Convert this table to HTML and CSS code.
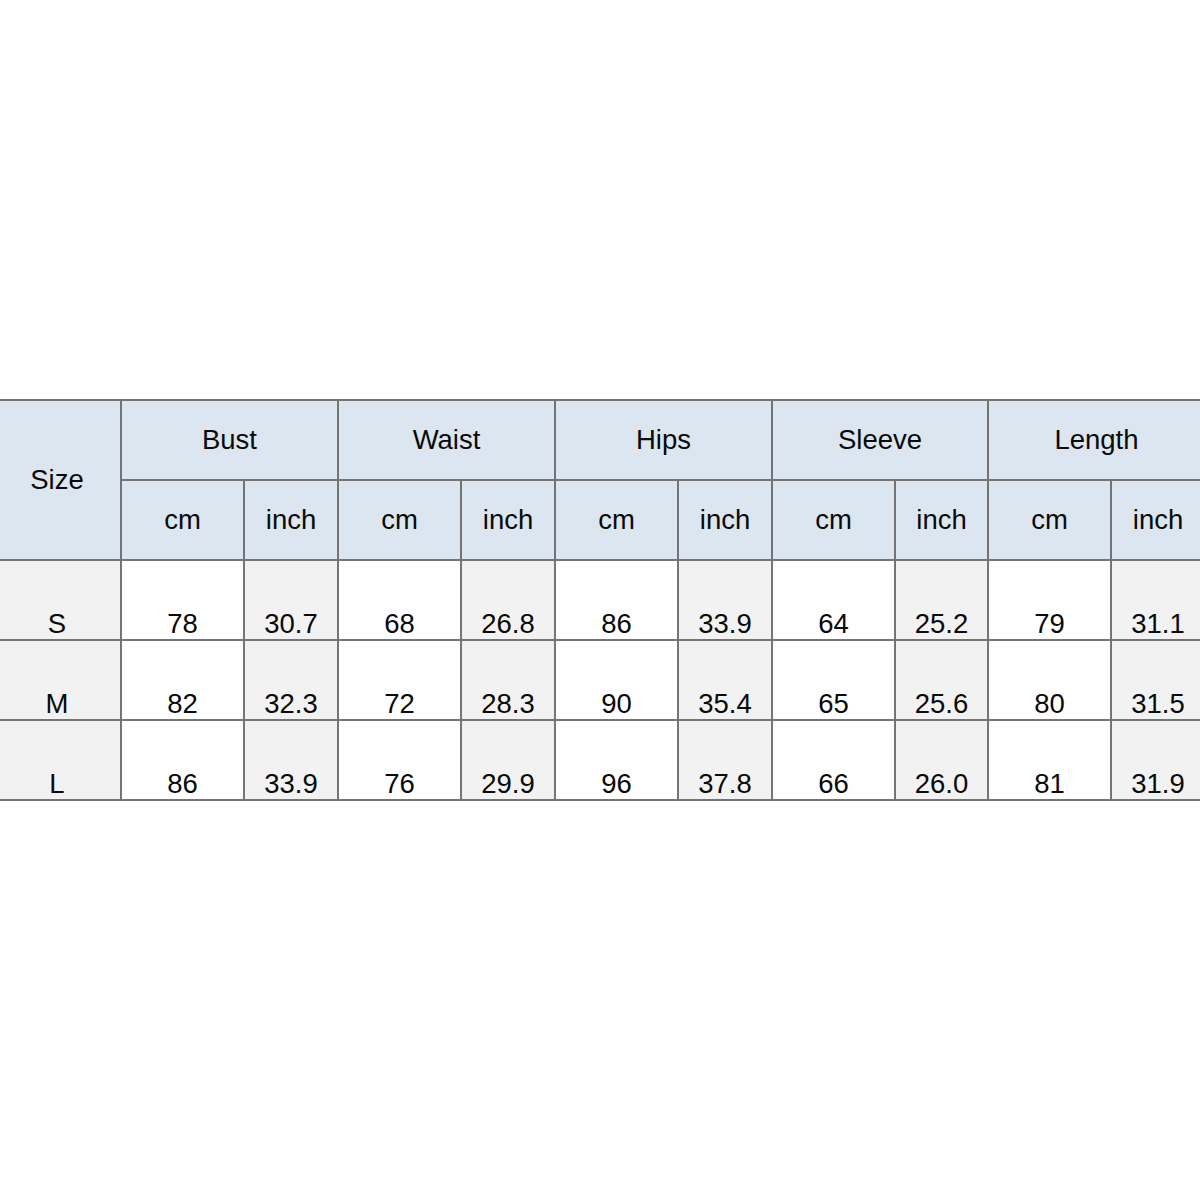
FILE: index.html
```html
<!DOCTYPE html>
<html>
<head>
<meta charset="utf-8">
<link rel="stylesheet" href="styles.css">
</head>
<body>
<div class="page">
  <div class="chart">
    <div class="cell head size">Size</div>
    <div class="cell head group">Bust</div>
    <div class="cell head group">Waist</div>
    <div class="cell head group">Hips</div>
    <div class="cell head group">Sleeve</div>
    <div class="cell head group">Length</div>

    <div class="cell head">cm</div><div class="cell head">inch</div>
    <div class="cell head">cm</div><div class="cell head">inch</div>
    <div class="cell head">cm</div><div class="cell head">inch</div>
    <div class="cell head">cm</div><div class="cell head">inch</div>
    <div class="cell head">cm</div><div class="cell head">inch</div>

    <div class="cell data grey">S</div>
    <div class="cell data">78</div><div class="cell data grey">30.7</div>
    <div class="cell data">68</div><div class="cell data grey">26.8</div>
    <div class="cell data">86</div><div class="cell data grey">33.9</div>
    <div class="cell data">64</div><div class="cell data grey">25.2</div>
    <div class="cell data">79</div><div class="cell data grey">31.1</div>

    <div class="cell data grey">M</div>
    <div class="cell data">82</div><div class="cell data grey">32.3</div>
    <div class="cell data">72</div><div class="cell data grey">28.3</div>
    <div class="cell data">90</div><div class="cell data grey">35.4</div>
    <div class="cell data">65</div><div class="cell data grey">25.6</div>
    <div class="cell data">80</div><div class="cell data grey">31.5</div>

    <div class="cell data grey">L</div>
    <div class="cell data">86</div><div class="cell data grey">33.9</div>
    <div class="cell data">76</div><div class="cell data grey">29.9</div>
    <div class="cell data">96</div><div class="cell data grey">37.8</div>
    <div class="cell data">66</div><div class="cell data grey">26.0</div>
    <div class="cell data">81</div><div class="cell data grey">31.9</div>
  </div>
</div>
</body>
</html>
```

FILE: styles.css
```css
html, body {
  margin: 0;
  padding: 0;
  background: #ffffff;
}

.page {
  width: 1200px;
  height: 1200px;
  overflow: hidden;
  padding-top: 399px;
  box-sizing: border-box;
}

.chart {
  display: grid;
  grid-template-columns: 126px 121px 92px 121px 92px 121px 92px 121px 91px 121px 92px;
  grid-auto-rows: 78px;
  gap: 2px;
  padding: 2px;
  background: #747474;
  margin-left: -8px;
  width: max-content;
  font-family: "Liberation Sans", Arial, sans-serif;
  font-size: 27.5px;
  color: #0a0a0a;
}

.cell {
  display: flex;
  justify-content: center;
  white-space: nowrap;
}

.head {
  background: #dce6f1;
  align-items: center;
}

.size {
  grid-row: span 2;
}

.group {
  grid-column: span 2;
}

.data {
  background: #ffffff;
  align-items: flex-end;
  line-height: 27px;
  padding-bottom: 2px;
}

.data.grey {
  background: #f2f2f2;
}
```
